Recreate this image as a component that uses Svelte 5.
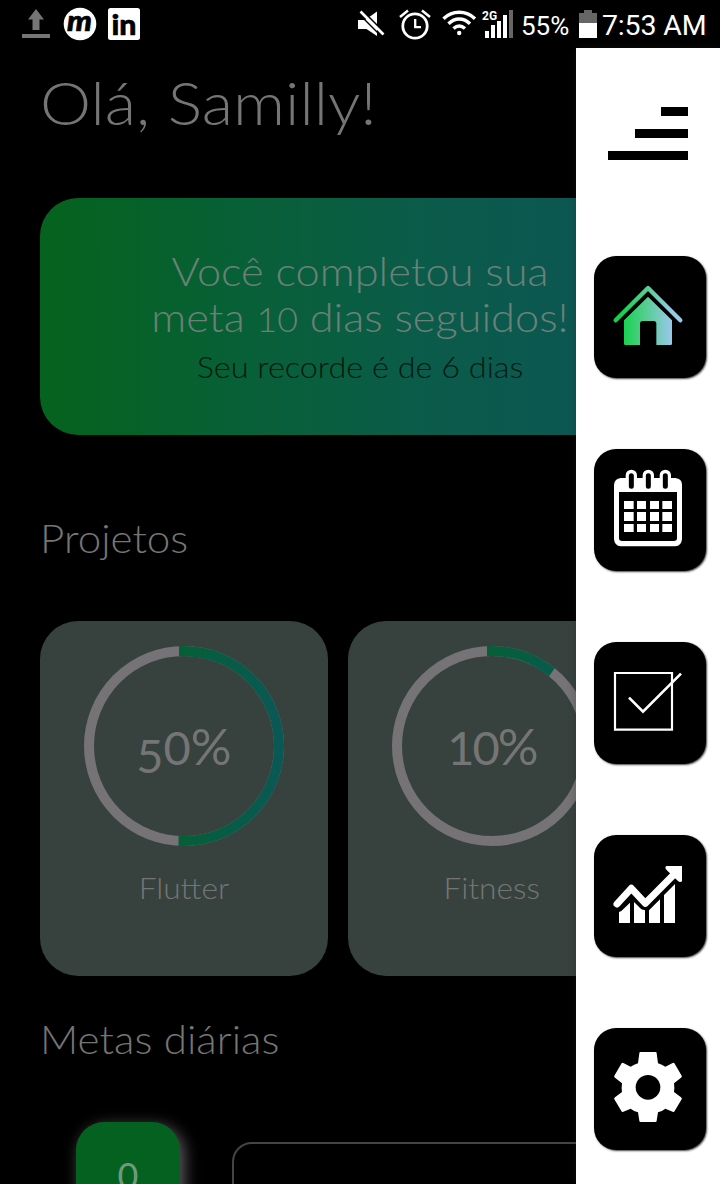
<script>
  const projects = [
    { name: 'Flutter', value: 50, digits: ['5', '0'], gradient: 'ring-a' },
    { name: 'Fitness', value: 10, digits: ['1', '0'], gradient: 'ring-b' }
  ];
  const length = 2 * Math.PI * 95;
</script>

<div class="screen">
  <header class="status">
    <svg class="left" width="150" height="48" viewBox="0 0 150 48">
      <path d="M36 9 44 19.500H39.500V30H32.500V19.500H28ZM22 34H50V38H22Z" fill="#757575" />
      <circle cx="80" cy="24" r="16.300" fill="#fff" />
      <text x="79.500" y="31" class="m" textLength="25" lengthAdjust="spacingAndGlyphs">m</text>
      <rect x="108" y="8" width="32" height="32" rx="2.500" fill="#fff" />
      <text x="124" y="34.500" class="in" textLength="25" lengthAdjust="spacingAndGlyphs">in</text>
    </svg>
    <svg class="right" width="163" height="48" viewBox="356 0 163 48" fill="#fff">
      <path d="M358 20H365L377 11.500V36L366.500 29H358Z" />
      <path d="M361 9.500 386 34.500" stroke="#000" stroke-width="2.200" />
      <path d="M360.500 11.500 383.500 34.500" stroke="#fff" stroke-width="2.600" />
      <path d="M358.500 13.500 380 35" stroke="#000" stroke-width="1.500" />
      <g fill="none" stroke="#fff">
        <circle cx="415" cy="26" r="12.200" stroke-width="2.800" />
        <path d="M415.200 19V27.200H421" stroke-width="2.300" />
        <path d="M400 17 408 10.500M430 17 422 10.500" stroke-width="2.500" />
        <path d="M443.500 18.800C452.500 10.200 466 10.200 475 18.800M448.500 23.800C455 17.500 463.500 17.500 470 23.800M453.500 28.500C457.500 25 461 25 465 28.500" stroke-width="3.500" />
      </g>
      <circle cx="459.200" cy="33" r="2.200" />
      <text x="482" y="19.700" class="net">2G</text>
      <path d="M485 31h4v7h-4zM491 25h4v13h-4zM497 21h4v17h-4zM503 15h4v23h-4z" />
      <path d="M509 10h4v28h-4z" fill="#666" />
    </svg>
    <span class="pct">55%</span>
    <svg class="battery" width="18" height="48" viewBox="0 0 18 48">
      <path d="M5 10H13V13H18V23H0V13H5Z" fill="#666" />
      <path d="M0 23H18V38H0Z" fill="#fff" />
    </svg>
    <span class="time">7:53 AM</span>
  </header>

  <div class="body">
    <main>
      <h1>Olá, Samilly!</h1>
      <section class="banner">
        <p class="l1">Você completou sua</p>
        <p class="l2">meta <span class="old">10</span> dias seguidos!</p>
        <p class="l3">Seu recorde é de 6 dias</p>
      </section>
      <h2 class="projects">Projetos</h2>
      <div class="cards">
        {#each projects as p}
          <article>
            <div class="ring">
              <svg width="200" height="200" viewBox="0 0 200 200" fill="none" stroke-width="10">
                <defs>
                  <linearGradient id={p.gradient} gradientUnits="userSpaceOnUse" x1="0" y1="95" x2="0" y2="200">
                    <stop stop-color="#055f37" />
                    <stop offset="1" stop-color="#0a5857" />
                  </linearGradient>
                </defs>
                <circle cx="100" cy="100" r="95" stroke="#757375" />
                <circle cx="100" cy="100" r="95" stroke="url(#{p.gradient})" stroke-linecap="square"
                  stroke-dasharray="{(length * p.value) / 100} {length}" transform="rotate(-90 100 100)" />
              </svg>
              <div class="value v{p.value}"><span class="d" class:low={p.digits[0] === '5'}>{p.digits[0]}</span><span class="d">{p.digits[1]}</span>%</div>
            </div>
            <p>{p.name}</p>
          </article>
        {/each}
      </div>
      <h2 class="goals">Metas diárias</h2>
      <div class="goal">
        <div class="count">0</div>
        <div class="field"></div>
      </div>
    </main>

    <nav>
      <div class="menu"><i></i><i></i><i></i></div>
      <a class="tile" href="#home" aria-label="Início">
        <svg viewBox="42 33 336 366">
          <defs>
            <linearGradient id="home" gradientUnits="userSpaceOnUse" x1="125" y1="0" x2="275" y2="0">
              <stop stop-color="#12d24c" />
              <stop offset=".4" stop-color="#4bce83" />
              <stop offset="1" stop-color="#98c8ea" />
            </linearGradient>
          </defs>
          <path d="M107 226 204 129 301 226" fill="none" stroke="url(#home)" stroke-width="13" stroke-linejoin="round" stroke-linecap="round" />
          <path d="M204 155 276 226V296Q276 300 272 300H229V236Q229 228 221 228H188Q180 228 180 236V300H136Q132 300 132 296V226Z" fill="url(#home)" />
        </svg>
      </a>
      <a class="tile" href="#calendar" aria-label="Calendário">
        <svg viewBox="42 27 336 366">
          <path fill="#fff" fill-rule="evenodd" d="M122 114H286Q306 116 306 134V298Q304 318 286 319H122Q104 318 102 298V134Q104 116 122 114ZM117 156V294Q117 303 126 303H282Q291 303 291 294V156Z" />
          <g stroke-linecap="round" fill="none">
            <path d="M154 106V132M205 106V132M256 106V132" stroke="#fff" stroke-width="34" />
            <path d="M154 107V139M205 107V139M256 107V139" stroke="#000" stroke-width="15" />
          </g>
          <path fill="#fff" d="M132 183h29v24h-29zM171 183h27v24h-27zM210 183h27v24h-27zM247 183h29v24h-29zM132 216h29v27h-29zM171 216h27v27h-27zM210 216h27v27h-27zM247 216h29v27h-29zM132 252h29v24h-29zM171 252h27v24h-27zM210 252h27v24h-27zM247 252h29v24h-29z" />
        </svg>
      </a>
      <a class="tile" href="#tasks" aria-label="Tarefas">
        <svg viewBox="42 36 336 366" fill="none" stroke="#fff">
          <path d="M105 129H276V299H105Z" stroke-width="6.500" />
          <path d="M147 203 189 245 303 131" stroke-width="8" />
        </svg>
      </a>
      <a class="tile" href="#stats" aria-label="Estatísticas">
        <svg viewBox="42 30 336 366" fill="#fff">
          <path d="M111 237 154 190 196 235 284 146" fill="none" stroke="#fff" stroke-width="21" stroke-linejoin="round" stroke-linecap="round" />
          <path d="M259 123H306V169Q300 174 294 168L262 137Q252 129 259 123Z" />
          <path d="M117 261 124 258 150 233V294H117ZM162 231 184 253 195 256V294H162ZM207 256 240 223V294H207ZM252 210 285 177V294H252Z" />
        </svg>
      </a>
      <a class="tile" href="#settings" aria-label="Configurações">
        <svg viewBox="42 24 336 366" fill="#fff">
          <path fill-rule="evenodd" d="M181 96H227Q230 96 230 100L234 130Q246 134 256 140L278 129Q282 127 284 131L305 167Q307 170 303 173L282 190Q284 203 282 216L303 232Q307 235 305 238L284 273Q282 277 278 275L256 266Q246 274 234 277L230 302Q230 306 226 306H182Q178 306 178 302L174 277Q162 274 152 266L130 275Q126 277 124 273L103 238Q101 235 105 232L126 216Q124 203 126 190L105 173Q101 170 103 167L124 131Q126 127 130 129L152 140Q162 134 174 130L178 100Q178 96 181 96ZM204 165A37 37 0 1 0 204 239A37 37 0 1 0 204 165Z" />
        </svg>
      </a>
    </nav>
  </div>
</div>

<style>
  :global(body) { margin: 0; background: #000; }
  * { box-sizing: border-box; }
  p, h1, h2 { margin: 0; font-weight: 300; white-space: nowrap; }
  .screen { width: 720px; height: 1184px; overflow: hidden; background: #000; font-family: Lato, sans-serif; color: #757575; display: flex; flex-direction: column; }
  .status { height: 48px; flex: none; display: flex; color: #fff; font-family: Roboto, sans-serif; line-height: 48px; }
  .right { margin-left: 206px; }
  .m { font: italic 900 28px Lato, sans-serif; text-anchor: middle; fill: #000; stroke: #000; stroke-width: .6; }
  .in { font: 900 29px Lato, sans-serif; text-anchor: middle; fill: #000; stroke: #000; stroke-width: .6; }
  .net { font: 700 12px Roboto, sans-serif; }
  .pct { font-size: 26px; width: 60px; padding-left: 2px; padding-top: 2px; }
  .time { font-size: 28.500px; padding: 2px 0 0 5px; white-space: nowrap; letter-spacing: -.15px; }
  .body { flex: 1; display: flex; min-height: 0; }
  main { width: 576px; flex: none; overflow: hidden; padding: 32px 0 0 40px; }
  h1 { font-size: 59px; line-height: 46px; height: 64px; width: 480px; overflow: hidden; transform: scaleX(1.095); transform-origin: left; }
  .banner { width: 640px; height: 237px; margin-top: 54px; padding-top: 50px; border-radius: 38px; background: linear-gradient(90deg, #05621f 3%, #086038 33%, #0b5b4b 62%, #0d5557 100%); text-align: center; color: #6b8178; }
  .l1, .l2 { font-size: 40px; line-height: 46px; transform: scaleX(1.084); }
  .old { font-size: 33px; line-height: 1; }
  .l3 { font-size: 30px; line-height: 46px; margin-top: 3px; color: #011a0f; transform: scaleX(1.08); }
  h2 { font-size: 40px; line-height: 48px; transform: scaleX(1.054); transform-origin: left; }
  .projects { margin-top: 79px; }
  .cards { display: flex; gap: 20px; margin-top: 59px; }
  article { width: 288px; height: 355px; flex: none; border-radius: 38px; background: #37423f; padding-top: 25px; display: flex; flex-direction: column; align-items: center; }
  .ring { display: grid; width: 200px; height: 200px; }
  .ring > * { grid-area: 1 / 1; }
  .value { font-size: 51px; line-height: 200px; text-align: center; white-space: nowrap; height: 200px; }
  .v10 { letter-spacing: -2px; }
  .d { font-size: 47px; line-height: 1; }
  .low { vertical-align: -8px; }
  article p { font-size: 30px; line-height: 36px; margin-top: 23px; transform: scaleX(1.055); }
  .goals { margin-top: 39px; }
  .goal { display: flex; padding-left: 36px; margin-top: 59px; gap: 52px; }
  .count { width: 104px; height: 120px; flex: none; border-radius: 28px; background: #05611f; box-shadow: 4px 4px 16px #625c62; text-align: center; font-size: 36px; line-height: 106px; color: #71997c; }
  .field { width: 500px; flex: none; height: 100px; margin-top: 20px; border: 2px solid #454545; border-radius: 20px; }
  nav { width: 144px; background: #fff; display: flex; flex-direction: column; padding: 59px 14px 0 18px; box-shadow: 0 0 8px rgba(48, 40, 40, .3); position: relative; }
  .menu { height: 149px; flex: none; padding-right: 18px; display: flex; flex-direction: column; align-items: flex-end; gap: 13px; }
  .menu i { height: 9px; width: 80px; background: #000; }
  .menu i:nth-child(1) { width: 27px; }
  .menu i:nth-child(2) { width: 53px; }
  .tile { display: block; width: 112px; height: 122px; margin-bottom: 71px; flex: none; border-radius: 22px; background: #000; box-shadow: 1px 1px 2px #444; }
  .tile svg { display: block; width: 112px; height: 122px; }
</style>
